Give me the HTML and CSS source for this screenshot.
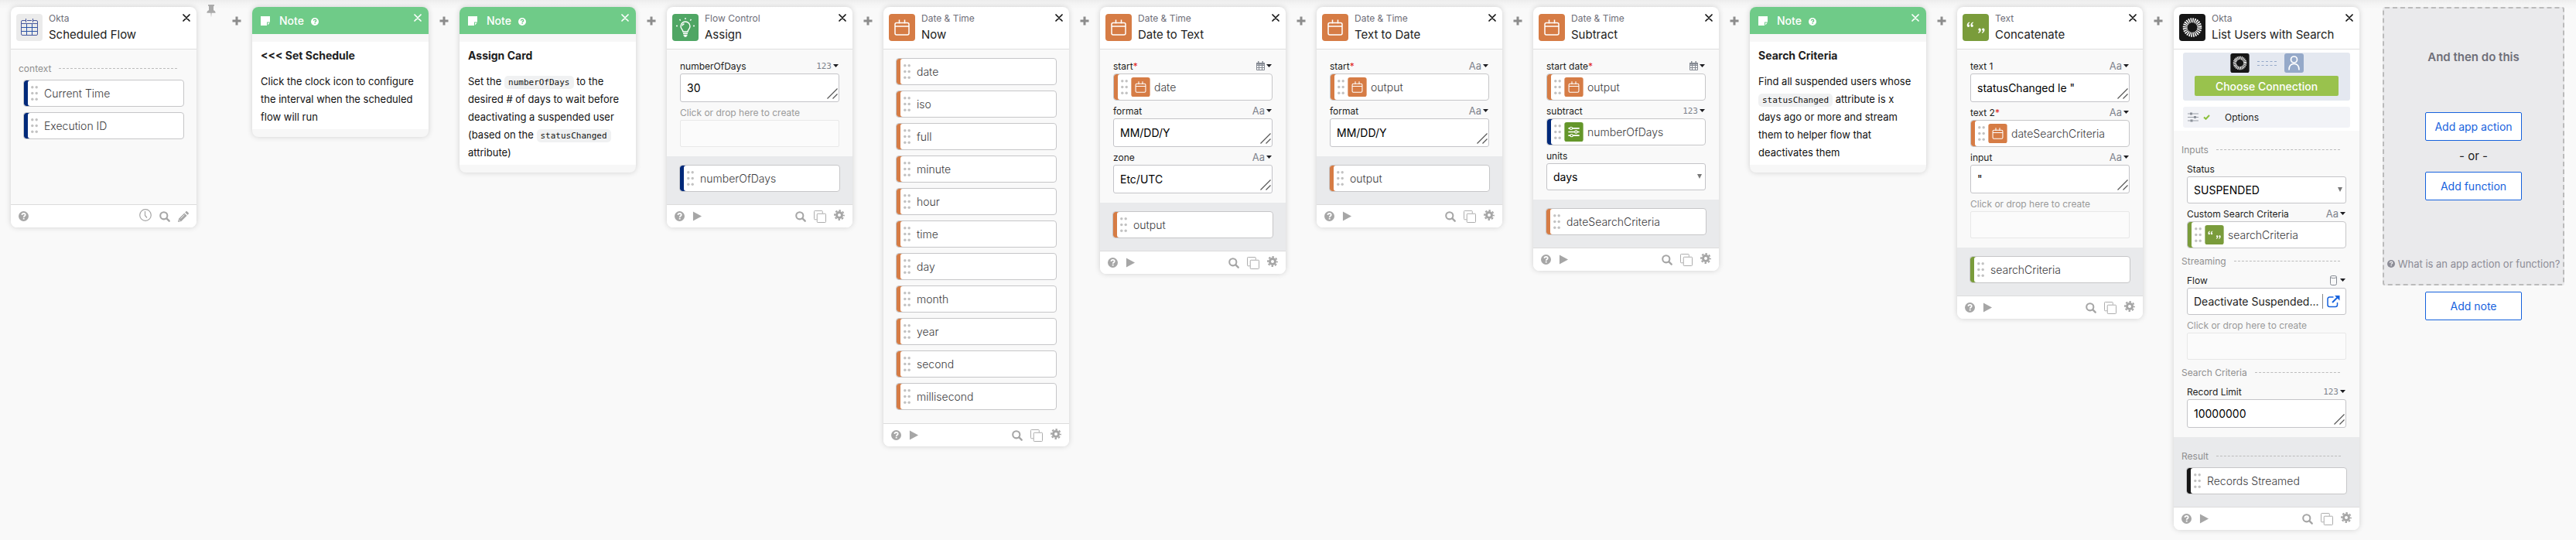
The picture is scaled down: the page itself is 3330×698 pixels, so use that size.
FILE: index.html
```html
<!DOCTYPE html>
<html lang="en">
<head>
<meta charset="utf-8">
<title>Scheduled Flow</title>
<link rel="stylesheet" href="styles.css">
</head>
<body>
<svg class="sprite" aria-hidden="true">
  <symbol id="i-close" viewBox="0 0 10 10"><path d="M1 1l8 8M9 1l-8 8" fill="none" stroke="currentColor" stroke-width="1.7" stroke-linecap="round"/></symbol>
  <symbol id="i-plus" viewBox="0 0 12 12"><path d="M4.5 .5h3v4h4v3h-4v4h-3v-4h-4v-3h4z" fill="currentColor"/></symbol>
  <symbol id="i-pin" viewBox="0 0 12 17"><path d="M2 0h8v1.800H9v5.500c1.600.700 2.600 1.800 2.600 3.400H6.600L6 16.500l-.6-5.800H.4c0-1.600 1-2.700 2.600-3.400V1.800H2z" fill="currentColor"/></symbol>
  <symbol id="i-help" viewBox="0 0 14 14"><circle cx="7" cy="7" r="7" fill="currentColor"/><path d="M4.700 5.300C4.800 3.900 5.800 3.100 7.100 3.100c1.300 0 2.300.8 2.300 2 0 1.700-2.200 1.700-2.200 3.200" fill="none" stroke="var(--mark)" stroke-width="1.900"/><path d="M6.200 9.400h2v1.900h-2z" fill="var(--mark)"/></symbol>
  <symbol id="i-play" viewBox="0 0 13 14"><path d="M.5.500l12 6.500-12 6.500z" fill="currentColor"/></symbol>
  <symbol id="i-search" viewBox="0 0 15 15"><circle cx="6.200" cy="6.200" r="4.900" fill="none" stroke="currentColor" stroke-width="2.200"/><path d="M9.800 9.800l3.800 3.800" stroke="currentColor" stroke-width="2.500" stroke-linecap="round"/></symbol>
  <symbol id="i-copy" viewBox="0 0 17 17"><path d="M4 12.500H1.500a1 1 0 0 1-1-1v-10a1 1 0 0 1 1-1h9.500a1 1 0 0 1 1 1V4" fill="none" stroke="currentColor"/><rect x="4.500" y="4.500" width="12" height="12" rx="1" fill="none" stroke="currentColor"/></symbol>
  <symbol id="i-gear" viewBox="0 0 14 14"><circle cx="7" cy="7" r="3.500" fill="none" stroke="currentColor" stroke-width="3"/><circle cx="7" cy="7" r="5.900" fill="none" stroke="currentColor" stroke-width="2" stroke-dasharray="2.500 2.130" stroke-dashoffset="1.250"/></symbol>
  <symbol id="i-clock" viewBox="0 0 16 16"><circle cx="8" cy="8" r="7.300" fill="none" stroke="currentColor" stroke-width="1.200"/><path d="M7.500 3v5.500l2.500 3" fill="none" stroke="currentColor" stroke-width="1.200"/></symbol>
  <symbol id="i-pencil" viewBox="0 0 14 14"><path d="M0 14l1-4.300L8.300 2.400l3.300 3.300L4.300 13zM9.200 1.500L10.300.400c.5-.5 1.200-.5 1.700 0l1.600 1.600c.5.500.5 1.200 0 1.700l-1.100 1.100z" fill="currentColor"/><path d="M1.300 11l1.700 1.700M3.500 9.500l5-5" stroke="#fff" stroke-width=".8"/></symbol>
  <symbol id="i-note" viewBox="0 0 12 12"><path d="M0 0h12v7.500H8V12H0z" fill="currentColor"/><path d="M9 8.500h2.700L9 11.600z" fill="currentColor"/></symbol>
  <symbol id="i-caret" viewBox="0 0 7 4"><path d="M0 0h7L3.500 4z" fill="currentColor"/></symbol>
  <symbol id="i-grip" viewBox="0 0 9 19"><g fill="#c2c2c2"><circle cx="1.800" cy="1.800" r="1.700"/><circle cx="7.200" cy="1.800" r="1.700"/><circle cx="1.800" cy="9.500" r="1.700"/><circle cx="7.200" cy="9.500" r="1.700"/><circle cx="1.800" cy="17.200" r="1.700"/><circle cx="7.200" cy="17.200" r="1.700"/></g></symbol>
  <symbol id="i-resize" viewBox="0 0 14 14"><path d="M.5 13.500l13-13M7.500 13.500l6-6" stroke="#555" stroke-width="1.200"/></symbol>
  <symbol id="i-tcal" viewBox="0 0 11 12"><path d="M.5 2.500h10v9H.5zM.5 5.500h10M.5 8.500h10M3.500 4v7.500M7.500 4v7.500" fill="none" stroke="#858a93"/><path d="M0 2h11v2.500H0zM2 0h1.500v2H2zM7.500 0H9v2H7.500z" fill="#858a93"/></symbol>
  <symbol id="i-tdb" viewBox="0 0 9 13"><rect x=".5" y=".5" width="8" height="12" rx="2" fill="none" stroke="#858a93"/><path d="M.5 2.500c2 1.400 6 1.400 8 0" fill="none" stroke="#858a93"/></symbol>
  <symbol id="i-open" viewBox="0 0 17 16"><path d="M8.500 2H3.500C1.800 2 1 3 1 4.500v7.500C1 13.500 2 14.500 3.500 14.500h7.500c1.500 0 2.500-1 2.500-2.500V9" fill="none" stroke="#1662dd" stroke-width="1.500"/><path d="M7 9l6.500-6.500" stroke="#1662dd" stroke-width="2"/><path d="M10 0h6.500v6.500z" fill="#1662dd"/></symbol>
  <symbol id="a-cal" viewBox="0 0 34 35"><rect width="34" height="35" rx="4" fill="#d67c45"/><path d="M10 11.500h14a2 2 0 0 1 2 2V25a2 2 0 0 1-2 2H10a2 2 0 0 1-2-2V13.500a2 2 0 0 1 2-2zM8 16h18M13.500 7.500v5M20.500 7.500v5" fill="none" stroke="#fff" stroke-width="1.500"/></symbol>
  <symbol id="a-sched" viewBox="0 0 34 35"><rect width="34" height="35" rx="4" fill="#ebebeb"/><path d="M7 17.500h20.500M7 22.500h20.500M13.500 12.500v14.500M20.500 12.500v14.500" stroke="#2d56a8" stroke-width="1" fill="none"/><path d="M12 8.500H8a1.500 1.500 0 0 0-1.500 1.500v16A1.500 1.500 0 0 0 8 27.500h18a1.500 1.500 0 0 0 1.500-1.500V10A1.500 1.500 0 0 0 26 8.500h-4M14 8.500h6M6.500 12.500h21M12.500 6v5M21.500 6v5" stroke="#4a5a9e" stroke-width="1" fill="none"/></symbol>
  <symbol id="a-bulb" viewBox="0 0 34 35"><rect width="34" height="35" rx="4" fill="#4fa664"/><path d="M14 23c0-2.500-3-3.500-3-7a6 6 0 0 1 12 0c0 3.500-3 4.500-3 7z" fill="none" stroke="#fff" stroke-width="1.400"/><path d="M14 25.300h6M14.500 27.500h5M15.500 29h3M13 15.500c.2-1.500 1-2.500 2.500-2.800M17 5v2M9.500 7l1.200 1.600M24.500 7l-1.200 1.600M5 15.500h2M27 15.500h2" stroke="#fff" stroke-width="1.400" fill="none"/></symbol>
  <symbol id="a-quote" viewBox="0 0 34 35"><rect width="34" height="35" rx="4" fill="#7a9c3b"/><path id="q" d="M9 10.500c-2 .5-3.300 2-3.300 4.300 0 1.300.7 2.200 1.700 2.200s1.700-.7 1.700-1.700-.6-1.600-1.500-1.600c.1-1 .8-1.700 1.700-2.100zM13.700 10.500c-2 .5-3.300 2-3.300 4.300 0 1.300.7 2.200 1.700 2.200s1.700-.7 1.700-1.700-.6-1.600-1.500-1.600c.1-1 .8-1.700 1.700-2.100z" fill="#fff"/><use href="#q" transform="rotate(180 17.100 17.700)"/></symbol>
  <symbol id="a-sliders" viewBox="0 0 34 35"><rect width="34" height="35" rx="4" fill="#64962a"/><path d="M7 11h20M7 17.500h20M7 24h20" stroke="#fff" stroke-width="2.400"/><g fill="#64962a" stroke="#fff" stroke-width="1.600"><circle cx="12" cy="11" r="2.300"/><circle cx="21" cy="17.500" r="2.300"/><circle cx="13" cy="24" r="2.300"/></g></symbol>
  <symbol id="a-okta" viewBox="0 0 34 35"><rect width="34" height="35" rx="4" fill="#161616"/><circle cx="17" cy="17.500" r="9.300" fill="none" stroke="#fff" stroke-width="6" stroke-dasharray="1.430 1.004"/></symbol>
  <symbol id="a-user" viewBox="0 0 25 25"><rect width="25" height="25" rx="3" fill="#95a9c9"/><circle cx="12.500" cy="8" r="4" fill="none" stroke="#fff" stroke-width="1.700"/><path d="M6 21.500c0-5.500 2.500-8 6.500-8s6.500 2.500 6.500 8" fill="none" stroke="#fff" stroke-width="1.700"/></symbol>
  <symbol id="i-options" viewBox="0 0 14 13"><path d="M0 2h14M0 6.500h14M0 11h14" stroke="#9a9fa8"/><path d="M3 .5h3v3H3zM8 5h3v3H8zM3.500 9.500h3v3h-3z" fill="#8b9099"/></symbol>
  <symbol id="i-check" viewBox="0 0 9 7"><path d="M1 3.500l2.500 2.300L8 1" fill="none" stroke="#8cc03c" stroke-width="2"/></symbol>
</svg>

<main class="flow">
  <section class="card">
    <header class="card-head"><svg class="app"><use href="#a-sched"/></svg><div class="card-name"><p class="kind">Okta</p><h2>Scheduled Flow</h2></div><button class="close" aria-label="Close"><svg><use href="#i-close"/></svg></button></header>
    <div class="body body-tall">
      <h3 class="group group-tight">context</h3>
      <ul class="chips">
        <li class="chip navy"><svg class="grip"><use href="#i-grip"/></svg>Current Time</li>
        <li class="chip navy"><svg class="grip"><use href="#i-grip"/></svg>Execution ID</li>
      </ul>
    </div>
    <footer class="card-foot"><button aria-label="Help"><svg class="s13"><use href="#i-help"/></svg></button><span class="spacer"></span><button class="raise" aria-label="Schedule"><svg class="s16"><use href="#i-clock"/></svg></button><button aria-label="Search"><svg class="s14"><use href="#i-search"/></svg></button><button aria-label="Edit"><svg class="s14"><use href="#i-pencil"/></svg></button></footer>
  </section>
  <div class="pin"><svg><use href="#i-pin"/></svg></div>
  <div class="joint"><button aria-label="Add step"><svg><use href="#i-plus"/></svg></button></div>

  <article class="card note">
    <header class="note-head"><svg class="note-icon"><use href="#i-note"/></svg><span>Note</span><svg class="note-help"><use href="#i-help"/></svg><button class="close" aria-label="Close"><svg><use href="#i-close"/></svg></button></header>
    <div class="note-body"><h2>&lt;&lt;&lt; Set Schedule</h2><p>Click the clock icon to configure the interval when the scheduled flow will run</p></div>
  </article>
  <div class="joint"><button aria-label="Add step"><svg><use href="#i-plus"/></svg></button></div>

  <article class="card note">
    <header class="note-head"><svg class="note-icon"><use href="#i-note"/></svg><span>Note</span><svg class="note-help"><use href="#i-help"/></svg><button class="close" aria-label="Close"><svg><use href="#i-close"/></svg></button></header>
    <div class="note-body"><h2>Assign Card</h2><p>Set the <code>numberOfDays</code> to the desired # of days to wait before deactivating a suspended user (based on the <code>statusChanged</code> attribute)</p></div>
  </article>
  <div class="joint"><button aria-label="Add step"><svg><use href="#i-plus"/></svg></button></div>

  <section class="card">
    <header class="card-head"><svg class="app"><use href="#a-bulb"/></svg><div class="card-name"><p class="kind">Flow Control</p><h2>Assign</h2></div><button class="close" aria-label="Close"><svg><use href="#i-close"/></svg></button></header>
    <div class="body">
      <div class="label"><label for="f1">numberOfDays</label><button class="type num" aria-label="Number">123<svg class="caret"><use href="#i-caret"/></svg></button></div>
      <div class="area"><textarea id="f1" rows="1">30</textarea><svg><use href="#i-resize"/></svg></div>
      <div class="label hint">Click or drop here to create</div>
      <div class="drop"></div>
    </div>
    <div class="output"><ul class="chips"><li class="chip navy"><svg class="grip"><use href="#i-grip"/></svg>numberOfDays</li></ul></div>
    <footer class="card-foot"><button aria-label="Help"><svg class="s13"><use href="#i-help"/></svg></button><button aria-label="Run"><svg class="s13"><use href="#i-play"/></svg></button><span class="spacer"></span><button aria-label="Search"><svg class="s14"><use href="#i-search"/></svg></button><button aria-label="Copy"><svg class="s16"><use href="#i-copy"/></svg></button><button class="raise" aria-label="Settings"><svg class="s14"><use href="#i-gear"/></svg></button></footer>
  </section>
  <div class="joint"><button aria-label="Add step"><svg><use href="#i-plus"/></svg></button></div>

  <section class="card">
    <header class="card-head"><svg class="app"><use href="#a-cal"/></svg><div class="card-name"><p class="kind">Date &amp; Time</p><h2>Now</h2></div><button class="close" aria-label="Close"><svg><use href="#i-close"/></svg></button></header>
    <div class="output plain">
      <ul class="chips">
        <li class="chip orange"><svg class="grip"><use href="#i-grip"/></svg>date</li>
        <li class="chip orange"><svg class="grip"><use href="#i-grip"/></svg>iso</li>
        <li class="chip orange"><svg class="grip"><use href="#i-grip"/></svg>full</li>
        <li class="chip orange"><svg class="grip"><use href="#i-grip"/></svg>minute</li>
        <li class="chip orange"><svg class="grip"><use href="#i-grip"/></svg>hour</li>
        <li class="chip orange"><svg class="grip"><use href="#i-grip"/></svg>time</li>
        <li class="chip orange"><svg class="grip"><use href="#i-grip"/></svg>day</li>
        <li class="chip orange"><svg class="grip"><use href="#i-grip"/></svg>month</li>
        <li class="chip orange"><svg class="grip"><use href="#i-grip"/></svg>year</li>
        <li class="chip orange"><svg class="grip"><use href="#i-grip"/></svg>second</li>
        <li class="chip orange"><svg class="grip"><use href="#i-grip"/></svg>millisecond</li>
      </ul>
    </div>
    <footer class="card-foot"><button aria-label="Help"><svg class="s13"><use href="#i-help"/></svg></button><button aria-label="Run"><svg class="s13"><use href="#i-play"/></svg></button><span class="spacer"></span><button aria-label="Search"><svg class="s14"><use href="#i-search"/></svg></button><button aria-label="Copy"><svg class="s16"><use href="#i-copy"/></svg></button><button class="raise" aria-label="Settings"><svg class="s14"><use href="#i-gear"/></svg></button></footer>
  </section>
  <div class="joint"><button aria-label="Add step"><svg><use href="#i-plus"/></svg></button></div>

  <section class="card">
    <header class="card-head"><svg class="app"><use href="#a-cal"/></svg><div class="card-name"><p class="kind">Date &amp; Time</p><h2>Date to Text</h2></div><button class="close" aria-label="Close"><svg><use href="#i-close"/></svg></button></header>
    <div class="body">
      <div class="label"><span>start<em>*</em></span><button class="type" aria-label="Date"><svg class="tcal"><use href="#i-tcal"/></svg><svg class="caret"><use href="#i-caret"/></svg></button></div>
      <div class="chip orange"><svg class="grip"><use href="#i-grip"/></svg><svg class="src"><use href="#a-cal"/></svg>date</div>
      <div class="label"><label for="f2">format</label><button class="type" aria-label="Text">Aa<svg class="caret"><use href="#i-caret"/></svg></button></div>
      <div class="area"><textarea id="f2" rows="1">MM/DD/Y</textarea><svg><use href="#i-resize"/></svg></div>
      <div class="label"><label for="f3">zone</label><button class="type" aria-label="Text">Aa<svg class="caret"><use href="#i-caret"/></svg></button></div>
      <div class="area"><textarea id="f3" rows="1">Etc/UTC</textarea><svg><use href="#i-resize"/></svg></div>
    </div>
    <div class="output"><ul class="chips"><li class="chip orange"><svg class="grip"><use href="#i-grip"/></svg>output</li></ul></div>
    <footer class="card-foot"><button aria-label="Help"><svg class="s13"><use href="#i-help"/></svg></button><button aria-label="Run"><svg class="s13"><use href="#i-play"/></svg></button><span class="spacer"></span><button aria-label="Search"><svg class="s14"><use href="#i-search"/></svg></button><button aria-label="Copy"><svg class="s16"><use href="#i-copy"/></svg></button><button class="raise" aria-label="Settings"><svg class="s14"><use href="#i-gear"/></svg></button></footer>
  </section>
  <div class="joint"><button aria-label="Add step"><svg><use href="#i-plus"/></svg></button></div>

  <section class="card">
    <header class="card-head"><svg class="app"><use href="#a-cal"/></svg><div class="card-name"><p class="kind">Date &amp; Time</p><h2>Text to Date</h2></div><button class="close" aria-label="Close"><svg><use href="#i-close"/></svg></button></header>
    <div class="body">
      <div class="label"><span>start<em>*</em></span><button class="type" aria-label="Text">Aa<svg class="caret"><use href="#i-caret"/></svg></button></div>
      <div class="chip orange"><svg class="grip"><use href="#i-grip"/></svg><svg class="src"><use href="#a-cal"/></svg>output</div>
      <div class="label"><label for="f4">format</label><button class="type" aria-label="Text">Aa<svg class="caret"><use href="#i-caret"/></svg></button></div>
      <div class="area"><textarea id="f4" rows="1">MM/DD/Y</textarea><svg><use href="#i-resize"/></svg></div>
    </div>
    <div class="output"><ul class="chips"><li class="chip orange"><svg class="grip"><use href="#i-grip"/></svg>output</li></ul></div>
    <footer class="card-foot"><button aria-label="Help"><svg class="s13"><use href="#i-help"/></svg></button><button aria-label="Run"><svg class="s13"><use href="#i-play"/></svg></button><span class="spacer"></span><button aria-label="Search"><svg class="s14"><use href="#i-search"/></svg></button><button aria-label="Copy"><svg class="s16"><use href="#i-copy"/></svg></button><button class="raise" aria-label="Settings"><svg class="s14"><use href="#i-gear"/></svg></button></footer>
  </section>
  <div class="joint"><button aria-label="Add step"><svg><use href="#i-plus"/></svg></button></div>

  <section class="card">
    <header class="card-head"><svg class="app"><use href="#a-cal"/></svg><div class="card-name"><p class="kind">Date &amp; Time</p><h2>Subtract</h2></div><button class="close" aria-label="Close"><svg><use href="#i-close"/></svg></button></header>
    <div class="body">
      <div class="label"><span>start date<em>*</em></span><button class="type" aria-label="Date"><svg class="tcal"><use href="#i-tcal"/></svg><svg class="caret"><use href="#i-caret"/></svg></button></div>
      <div class="chip orange"><svg class="grip"><use href="#i-grip"/></svg><svg class="src"><use href="#a-cal"/></svg>output</div>
      <div class="label"><span>subtract</span><button class="type num" aria-label="Number">123<svg class="caret"><use href="#i-caret"/></svg></button></div>
      <div class="chip navy"><svg class="grip"><use href="#i-grip"/></svg><svg class="src"><use href="#a-sliders"/></svg>numberOfDays</div>
      <div class="label"><label for="f5">units</label></div>
      <div class="pick"><select id="f5"><option>days</option></select></div>
    </div>
    <div class="output"><ul class="chips"><li class="chip orange"><svg class="grip"><use href="#i-grip"/></svg>dateSearchCriteria</li></ul></div>
    <footer class="card-foot"><button aria-label="Help"><svg class="s13"><use href="#i-help"/></svg></button><button aria-label="Run"><svg class="s13"><use href="#i-play"/></svg></button><span class="spacer"></span><button aria-label="Search"><svg class="s14"><use href="#i-search"/></svg></button><button aria-label="Copy"><svg class="s16"><use href="#i-copy"/></svg></button><button class="raise" aria-label="Settings"><svg class="s14"><use href="#i-gear"/></svg></button></footer>
  </section>
  <div class="joint"><button aria-label="Add step"><svg><use href="#i-plus"/></svg></button></div>

  <article class="card note">
    <header class="note-head"><svg class="note-icon"><use href="#i-note"/></svg><span>Note</span><svg class="note-help"><use href="#i-help"/></svg><button class="close" aria-label="Close"><svg><use href="#i-close"/></svg></button></header>
    <div class="note-body"><h2>Search Criteria</h2><p>Find all suspended users whose <code>statusChanged</code> attribute is x days ago or more and stream them to helper flow that deactivates them</p></div>
  </article>
  <div class="joint"><button aria-label="Add step"><svg><use href="#i-plus"/></svg></button></div>

  <section class="card">
    <header class="card-head"><svg class="app"><use href="#a-quote"/></svg><div class="card-name"><p class="kind">Text</p><h2>Concatenate</h2></div><button class="close" aria-label="Close"><svg><use href="#i-close"/></svg></button></header>
    <div class="body">
      <div class="label"><label for="f6">text 1</label><button class="type" aria-label="Text">Aa<svg class="caret"><use href="#i-caret"/></svg></button></div>
      <div class="area"><textarea id="f6" rows="1">statusChanged le "</textarea><svg><use href="#i-resize"/></svg></div>
      <div class="label"><span>text 2<em>*</em></span><button class="type" aria-label="Text">Aa<svg class="caret"><use href="#i-caret"/></svg></button></div>
      <div class="chip orange"><svg class="grip"><use href="#i-grip"/></svg><svg class="src"><use href="#a-cal"/></svg>dateSearchCriteria</div>
      <div class="label"><label for="f7">input</label><button class="type" aria-label="Text">Aa<svg class="caret"><use href="#i-caret"/></svg></button></div>
      <div class="area"><textarea id="f7" rows="1">"</textarea><svg><use href="#i-resize"/></svg></div>
      <div class="label hint">Click or drop here to create</div>
      <div class="drop"></div>
    </div>
    <div class="output"><ul class="chips"><li class="chip green"><svg class="grip"><use href="#i-grip"/></svg>searchCriteria</li></ul></div>
    <footer class="card-foot"><button aria-label="Help"><svg class="s13"><use href="#i-help"/></svg></button><button aria-label="Run"><svg class="s13"><use href="#i-play"/></svg></button><span class="spacer"></span><button aria-label="Search"><svg class="s14"><use href="#i-search"/></svg></button><button aria-label="Copy"><svg class="s16"><use href="#i-copy"/></svg></button><button class="raise" aria-label="Settings"><svg class="s14"><use href="#i-gear"/></svg></button></footer>
  </section>
  <div class="joint"><button aria-label="Add step"><svg><use href="#i-plus"/></svg></button></div>

  <section class="card">
    <header class="card-head"><svg class="app"><use href="#a-okta"/></svg><div class="card-name"><p class="kind">Okta</p><h2>List Users with Search</h2></div><button class="close" aria-label="Close"><svg><use href="#i-close"/></svg></button></header>
    <div class="setup">
      <div class="connection">
        <div class="link"><svg class="end"><use href="#a-okta"/></svg><span class="wire"></span><svg class="end"><use href="#a-user"/></svg></div>
        <button class="choose">Choose Connection</button>
      </div>
      <button class="options"><svg class="sliders"><use href="#i-options"/></svg><svg class="check"><use href="#i-check"/></svg><span>Options</span></button>
    </div>
    <div class="body">
      <h3 class="group">Inputs</h3>
      <div class="label"><label for="f8">Status</label></div>
      <div class="pick"><select id="f8"><option>SUSPENDED</option></select></div>
      <div class="label"><span>Custom Search Criteria</span><button class="type" aria-label="Text">Aa<svg class="caret"><use href="#i-caret"/></svg></button></div>
      <div class="chip green"><svg class="grip"><use href="#i-grip"/></svg><svg class="src"><use href="#a-quote"/></svg>searchCriteria</div>
      <h3 class="group">Streaming</h3>
      <div class="label"><span>Flow</span><button class="type" aria-label="Flow"><svg class="tdb"><use href="#i-tdb"/></svg><svg class="caret"><use href="#i-caret"/></svg></button></div>
      <div class="flowref"><span>Deactivate Suspended...</span><button aria-label="Open flow"><svg><use href="#i-open"/></svg></button></div>
      <div class="label hint">Click or drop here to create</div>
      <div class="drop"></div>
      <h3 class="group">Search Criteria</h3>
      <div class="label"><label for="f9">Record Limit</label><button class="type num" aria-label="Number">123<svg class="caret"><use href="#i-caret"/></svg></button></div>
      <div class="area"><textarea id="f9" rows="1">10000000</textarea><svg><use href="#i-resize"/></svg></div>
    </div>
    <div class="output titled"><h3 class="group group-tight">Result</h3><ul class="chips"><li class="chip black"><svg class="grip"><use href="#i-grip"/></svg>Records Streamed</li></ul></div>
    <footer class="card-foot"><button aria-label="Help"><svg class="s13"><use href="#i-help"/></svg></button><button aria-label="Run"><svg class="s13"><use href="#i-play"/></svg></button><span class="spacer"></span><button aria-label="Search"><svg class="s14"><use href="#i-search"/></svg></button><button aria-label="Copy"><svg class="s16"><use href="#i-copy"/></svg></button><button class="raise" aria-label="Settings"><svg class="s14"><use href="#i-gear"/></svg></button></footer>
  </section>

  <aside class="next">
    <div class="next-box">
      <h2>And then do this</h2>
      <div class="choices"><button class="add">Add app action</button><p>- or -</p><button class="add">Add function</button></div>
      <a href="#help"><svg><use href="#i-help"/></svg>What is an app action or function?</a>
    </div>
    <button class="add">Add note</button>
  </aside>
</main>
</body>
</html>
```
FILE: styles.css
```css
* { box-sizing: border-box; }
body { margin: 0; min-height: 100vh; background: linear-gradient(#ededed, #f4f4f4 5px, #f9f9f9 12px); background-repeat: no-repeat; background-color: #f9f9f9; font-family: Inter, "Liberation Sans", sans-serif; font-size: 12px; color: #1d1d21; }
h2, h3, p, ul { margin: 0; padding: 0; list-style: none; }
button { margin: 0; padding: 0; border: 0; background: none; font: inherit; color: inherit; cursor: pointer; }
svg { display: block; flex: none; }
.sprite { position: absolute; width: 0; height: 0; }
.flow { display: flex; align-items: flex-start; padding: 9px 15px 13px 14px; }

.card { flex: 0 0 240px; border-radius: 8px; background: #fff; box-shadow: 0 0 7px rgba(0, 0, 0, .17); overflow: hidden; }
.card-head { display: flex; align-items: center; gap: 8px; height: 55px; padding: 0 8px 2px 7px; border-bottom: 1px solid #dedede; }
.app { width: 34px; height: 35px; }
.card-name { flex: 1; min-width: 0; }
.kind { line-height: 19px; color: #6e6e78; }
.card-name h2 { font-size: 15px; font-weight: 400; line-height: 23px; white-space: nowrap; }
.close { align-self: flex-start; padding-top: 9px; color: #111; }
.close svg { width: 10px; height: 10px; }

.pin { flex: 0 0 32px; padding-left: 13px; color: #aaa; }
.pin svg { width: 12px; height: 17px; margin-top: -3px; }
.joint { flex: 0 0 40px; display: flex; justify-content: center; padding-top: 12px; color: #8c8c8c; }
.joint svg { width: 12px; height: 12px; }

.body { padding: 8px 17px 12px; background: #f9f9f9; }
.body-tall { min-height: 200px; }
.body-tall .chips { margin: 0 -1px; }
.label { display: flex; justify-content: space-between; align-items: center; height: 23px; padding-top: 3px; white-space: nowrap; }
.label em { color: #e0241b; font-style: normal; }
.hint { color: #9a9a9a; }
.type { display: flex; align-items: center; gap: 2px; padding-right: 1px; font-size: 13px; color: #7d828c; }
.num { font-family: "DejaVu Sans Mono", monospace; font-size: 11px; }
.caret { width: 7px; height: 4px; color: #1d1d21; }
.tcal { width: 11px; height: 12px; }
.tdb { width: 9px; height: 13px; margin-right: 2px; }
.area { position: relative; height: 37px; }
.area textarea { display: block; width: 100%; height: 100%; padding: 8px; border: 1px solid #c4c4c8; border-radius: 3px; background: #fff; font: 14px/19px Inter, "Liberation Sans", sans-serif; color: #000; resize: none; overflow: hidden; }
.area svg { position: absolute; right: 2px; bottom: 4px; width: 14px; height: 14px; }
.drop { height: 35px; border: 1px solid #e8e8e8; border-radius: 2px; background: #fbfbfb; }
.pick { position: relative; height: 35px; }
.pick select { width: 100%; height: 100%; padding: 0 8px; border: 1px solid #c4c4c8; border-radius: 3px; background: #fff; font: 14px Inter, "Liberation Sans", sans-serif; color: #000; appearance: none; }
.pick::after { content: ""; position: absolute; right: 5px; top: 14px; border: 3px solid transparent; border-top: 6px solid #777; border-bottom: 0; }

.chips { display: flex; flex-direction: column; gap: 7px; }
.chip { position: relative; display: flex; align-items: center; height: 35px; padding-left: 9px; border: 1px solid #c6c6c8; border-radius: 4px; background: #fff; font-size: 14px; font-weight: 300; color: #3c3c40; box-shadow: inset 5px 0 0 var(--bar); white-space: nowrap; }
.grip { width: 9px; height: 19px; margin-right: 8px; }
.src { width: 25px; height: 25px; margin: 0 5px 0 -4px; }
.navy { --bar: #00297a; }
.orange { --bar: #d67c45; }
.green { --bar: #7a9c3b; }
.black { --bar: #161616; }
.output { padding: 11px 16px 16px; background: #e9eaec; }
.plain { background: #f9f9f9; padding-bottom: 17px; }
.titled { padding-top: 8px; }

.group { display: flex; align-items: center; gap: 10px; height: 24px; margin: 4px -7px 0; padding-right: 15px; font-size: 12px; font-weight: 400; color: #8f8f8f; white-space: nowrap; }
.group::after { content: ""; flex: 1; border-top: 1px dashed #bcbcbc; }
.group-tight { margin-bottom: 3px; }
.titled .group { margin-left: -6px; }

.card-foot { --mark: #fff; display: flex; align-items: center; gap: 10px; height: 30px; padding: 0 10px; border-top: 1px solid #dcdcdc; background: #fff; color: #a6a6a6; }
.spacer { flex: 1; }
.s13 { width: 13px; height: 13px; }
.s14 { width: 14px; height: 14px; }
.s16 { width: 16px; height: 16px; }
.raise { padding-bottom: 4px; }

.note { flex-basis: 228px; background: #f7f7f7; padding-bottom: 10px; }
.note-head { --mark: #6fcb88; display: flex; align-items: center; height: 35px; padding: 0 9px 0 11px; background: #6fcb88; color: #fff; font-size: 14px; font-weight: 500; }
.note-icon { width: 12px; height: 12px; margin-right: 12px; }
.note-help { width: 10px; height: 10px; margin: 2px auto 0 9px; }
.note-head .close { color: #fff; }
.note-body { margin-top: 10px; padding: 8px 11px 4px; background: #fff; }
.note-body h2 { font-size: 14px; font-weight: 700; line-height: 20px; }
.note-body p { margin-top: 12px; font-size: 13px; line-height: 23px; color: #111; }
.note-body code { padding: 2px 5px; border-radius: 5px; background: #f0f1f2; font: 11px "DejaVu Sans Mono", monospace; }

.setup { display: flex; flex-direction: column; gap: 8px; padding: 4px 12px; background: #fff; }
.connection { padding: 1px 15px 6px; border-radius: 3px; background: #e4e8f0; }
.link { display: flex; justify-content: center; align-items: center; gap: 10px; }
.end { width: 25px; height: 25px; }
.wire { width: 25px; height: 6px; border: 1px dashed #95a9c9; border-width: 1px 0; }
.choose { display: block; width: 100%; height: 26px; margin-top: 4px; border-radius: 2px; background: #99c24d; color: #fff; font-size: 14px; font-weight: 500; }
.options { display: flex; align-items: center; height: 27px; padding-left: 6px; border-radius: 3px; background: #f2f3f7; }
.sliders { width: 14px; height: 13px; margin-right: 6px; }
.check { width: 9px; height: 7px; margin-right: 19px; }
.flowref { display: flex; align-items: center; justify-content: space-between; height: 35px; padding: 0 7px 0 8px; border: 1px solid #c4c4c8; border-radius: 3px; background: #fff; font-size: 14px; }
.flowref span { min-width: 0; overflow: hidden; white-space: nowrap; }
.flowref button { padding-left: 5px; border-left: 1px solid #888; height: 19px; }
.flowref svg { width: 17px; height: 16px; }

.next { flex: 1 0 235px; margin-left: 30px; display: flex; flex-direction: column; align-items: center; gap: 8px; }
.next-box { --mark: #eaeaec; align-self: stretch; display: flex; flex-direction: column; align-items: center; height: 360px; padding: 52px 0 16px; border: 2px dashed #bbb; border-radius: 3px; background: #eaeaec; }
.next-box h2 { font-size: 15px; font-weight: 600; line-height: 22px; color: #6e6e78; }
.choices { margin-top: 60px; text-align: center; }
.choices p { font-size: 15px; line-height: 40px; }
.add { width: 125px; height: 37px; border: 1px solid #1662dd; border-radius: 2px; background: #fff; color: #1662dd; font-size: 14px; }
.next-box a { display: flex; align-items: center; gap: 4px; margin-top: auto; line-height: 20px; color: #8c8c96; font-size: 13px; text-decoration: none; white-space: nowrap; }
.next-box a svg { width: 10px; height: 10px; }
```
